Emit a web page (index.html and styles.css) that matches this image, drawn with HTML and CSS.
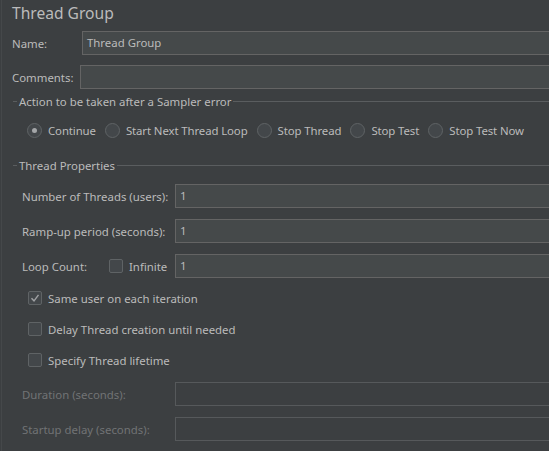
FILE: index.html
```html
<!DOCTYPE html>
<html>
<head>
<meta charset="utf-8">
<link rel="stylesheet" href="styles.css">
</head>
<body>
<div class="panel">
  <div class="title">Thread Group</div>

  <div class="row name-row">
    <label class="lbl lbl-name">Name:</label>
    <div class="field">Thread Group</div>
  </div>
  <div class="row comments-row">
    <label class="lbl lbl-comments">Comments:</label>
    <div class="field"></div>
  </div>

  <div class="legend legend-action"><span>Action to be taken after a Sampler error</span></div>
  <div class="radios">
    <div class="opt"><span class="radio checked"></span><span>Continue</span></div>
    <div class="opt"><span class="radio"></span><span>Start Next Thread Loop</span></div>
    <div class="opt"><span class="radio"></span><span>Stop Thread</span></div>
    <div class="opt"><span class="radio"></span><span>Stop Test</span></div>
    <div class="opt"><span class="radio"></span><span>Stop Test Now</span></div>
  </div>

  <div class="legend legend-props"><span>Thread Properties</span></div>

  <div class="prow first">
    <label class="plbl">Number of Threads (users):</label>
    <div class="field">1</div>
  </div>
  <div class="prow">
    <label class="plbl">Ramp-up period (seconds):</label>
    <div class="field">1</div>
  </div>
  <div class="prow">
    <div class="plbl loop">
      <span class="loop-text">Loop Count:</span>
      <span class="check"></span><span>Infinite</span>
    </div>
    <div class="field">1</div>
  </div>

  <div class="crow first"><span class="check checked"><svg viewBox="0 0 14 14" width="14" height="14"><path d="M3.5 7.2 L6 9.8 L10.5 3.8" fill="none" stroke="#a0a2a4" stroke-width="1.4"/></svg></span><span>Same user on each iteration</span></div>
  <div class="crow"><span class="check"></span><span>Delay Thread creation until needed</span></div>
  <div class="crow"><span class="check"></span><span>Specify Thread lifetime</span></div>

  <div class="prow disabled dfirst">
    <label class="plbl">Duration (seconds):</label>
    <div class="field"></div>
  </div>
  <div class="prow disabled">
    <label class="plbl">Startup delay (seconds):</label>
    <div class="field"></div>
  </div>
</div>
</body>
</html>
```

FILE: styles.css
```css
html, body {
  margin: 0;
  padding: 0;
  background: #3c3f41;
  overflow: hidden;
}
body {
  width: 549px;
  height: 451px;
  font-family: "Noto Sans", "Open Sans", sans-serif;
  font-size: 11.4px;
  color: #bbbbbb;
  white-space: nowrap;
}
.panel {
  margin-left: 1px;
  border-left: 1px solid #45484a;
  height: 451px;
  box-sizing: border-box;
}
.title {
  height: 31px;
  line-height: 26px;
  font-size: 15.6px;
  padding-left: 10px;
  color: #bbbbbb;
}
.row {
  display: flex;
  align-items: center;
  height: 24px;
  margin-right: -6px;
}
.lbl {
  padding-left: 10px;
  box-sizing: border-box;
  flex: none;
}
.lbl-name { width: 80px; }
.lbl-comments { width: 78px; }
.comments-row { margin-top: 10px; }
.field {
  flex: 1;
  height: 24px;
  box-sizing: border-box;
  border: 1px solid #646464;
  background: #45494a;
  line-height: 22px;
  padding-left: 4px;
  color: #bbbbbb;
}
.legend {
  display: flex;
  align-items: center;
  height: 14px;
  padding-left: 11px;
}
.legend::before {
  content: "";
  width: 4px;
  height: 1px;
  background: #5a5d5f;
  margin-right: 2px;
}
.legend::after {
  content: "";
  flex: 1;
  height: 1px;
  background: #5a5d5f;
  margin-left: 2px;
}
.legend-action { margin-top: 5px; }
.legend-props { margin-top: 18px; }
.radios {
  display: flex;
  align-items: center;
  height: 20px;
  margin-top: 12px;
  padding-left: 25px;
  gap: 9px;
  letter-spacing: -0.1px;
}
.opt {
  display: flex;
  align-items: center;
  gap: 6px;
}
.radio {
  width: 15px;
  height: 15px;
  box-sizing: border-box;
  border-radius: 50%;
  border: 1px solid #5f6365;
  background: #43474a;
  display: flex;
  align-items: center;
  justify-content: center;
  flex: none;
}
.radio.checked::after {
  content: "";
  width: 5px;
  height: 5px;
  border-radius: 50%;
  background: #a4a6a8;
}
.prow {
  display: flex;
  align-items: center;
  height: 24px;
  margin-top: 11px;
  margin-right: -6px;
}
.prow.first { margin-top: 12px; }
.plbl {
  width: 173px;
  padding-left: 20px;
  box-sizing: border-box;
  flex: none;
}
.loop {
  display: flex;
  align-items: center;
}
.loop-text { width: 87px; flex: none; }
.loop .check { margin-right: 6px; }
.check {
  width: 14px;
  height: 14px;
  box-sizing: border-box;
  border: 1px solid #5f6365;
  border-radius: 2px;
  background: #43474a;
  flex: none;
  position: relative;
}
.check svg {
  position: absolute;
  left: -1px;
  top: -1px;
}
.crow {
  display: flex;
  align-items: center;
  gap: 6px;
  height: 20px;
  margin-top: 11px;
  padding-left: 26px;
}
.crow.first { margin-top: 10px; }
.prow.dfirst { margin-top: 12px; }
.disabled .plbl { color: #717375; }
.disabled .field {
  background: #3c3f41;
  border-color: #56595b;
}
```
